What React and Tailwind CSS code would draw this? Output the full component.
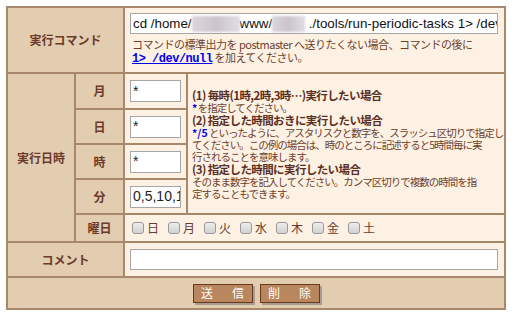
import React from "react";

const jp = "font-['Noto_Sans_CJK_JP','Noto_Sans',sans-serif]";

function Head({ children, className = "" }) {
  return (
    <div
      className={`bg-[#e3cdb0] flex items-center justify-center text-[12px] font-bold text-[#6b3a2c] ${className}`}
    >
      {children}
    </div>
  );
}

function Cell({ children, className = "" }) {
  return <div className={`bg-[#fdf1e4] ${className}`}>{children}</div>;
}

function FieldInput({ value }) {
  return (
    <Cell className="flex items-center pl-[5px]">
      <div className="w-[51px] h-[22px] bg-white border border-[#a6a6a6] flex items-center px-[2px] text-[14px] text-[#222] font-['Liberation_Sans',sans-serif] overflow-hidden whitespace-nowrap">
        {value}
      </div>
    </Cell>
  );
}

function Blur({ w }) {
  return (
    <span
      className={`inline-block h-[16px] align-middle bg-gradient-to-r from-[#dcd6dc] via-[#cbc4ce] to-[#e2dde3] blur-[1px] ${w}`}
    />
  );
}

function Box() {
  return (
    <span className="inline-block w-[12px] h-[12px] rounded-[3px] border border-[#9a9a9a] bg-gradient-to-b from-[#eeeeee] to-[#d2d2d2] mr-[3px] align-middle" />
  );
}

function Btn({ a, b }) {
  return (
    <button className="w-[60px] h-[19px] bg-[#b8865f] border border-[#6b3a1c] shadow-[2px_2px_0_#a89c90] text-white text-[12px] leading-none flex items-center justify-center gap-[19px] whitespace-nowrap">
      <span>{a}</span>
      <span>{b}</span>
    </button>
  );
}

export default function App() {
  const days = ["日", "月", "火", "水", "木", "金", "土"];
  return (
    <div className={`w-[512px] h-[316px] bg-white pt-[6px] pl-[6px] ${jp}`}>
      <div className="w-[500px] grid grid-cols-[66px_47px_61px_316px] grid-rows-[64px_34px_33px_33px_33px_26px_33px_30px] gap-[2px] p-[2px] bg-[#a9876b]">
        <Head className="col-span-2">実行コマンド</Head>
        <Cell className="col-span-2 pl-[5px] pt-[5px] text-[11px] leading-[13px] text-[#6e3f2d]">
          <div className="w-[368px] h-[21px] bg-white border border-[#a6a6a6] flex items-center px-[2px] text-[13.33px] text-[#111] font-['Liberation_Sans',sans-serif] whitespace-nowrap overflow-hidden">
            cd /home/
            <Blur w="w-[48px] shrink-0" />
            www/
            <Blur w="w-[33px] shrink-0" />
            &nbsp;./tools/run-periodic-tasks 1&gt; /dev/null
          </div>
          <div className="mt-[4px] pl-[2px] whitespace-nowrap tracking-[-0.5px]">
            コマンドの標準出力を postmaster へ送りたくない場合、コマンドの後に
            <br />
            <span className="text-[#0000ee] font-bold underline font-['Liberation_Mono',monospace] text-[12px] tracking-[-0.5px]">
              1&gt; /dev/null
            </span>{" "}
            を加えてください。
          </div>
        </Cell>

        <Head className="row-span-5">実行日時</Head>
        <Head>月</Head>
        <FieldInput value="*" />
        <Cell className="row-span-4 flex flex-col justify-center pl-[4px] pt-[2px] text-[10.5px] leading-[12px] text-[#6e3f2d] whitespace-nowrap tracking-[-1px] overflow-hidden">
          <div className="font-bold text-[#5a2f22] text-[11.5px] leading-[13px] tracking-[-0.6px]">
            (1) 毎時(1時,2時,3時…)実行したい場合
          </div>
          <div>
            <span className="text-[#0000ee] font-bold">*</span> を指定してください。
          </div>
          <div className="font-bold text-[#5a2f22] text-[11.5px] leading-[13px] tracking-[-0.6px]">
            (2) 指定した時間おきに実行したい場合
          </div>
          <div>
            <span className="text-[#0000ee] font-bold tracking-[0px]">*/5</span>{" "}
            といったように、アスタリスクと数字を、スラッシュ区切りで指定し
          </div>
          <div>てください。この例の場合は、時のところに記述すると5時間毎に実</div>
          <div>行されることを意味します。</div>
          <div className="font-bold text-[#5a2f22] text-[11.5px] leading-[13px] tracking-[-0.6px]">
            (3) 指定した時間に実行したい場合
          </div>
          <div>そのまま数字を記入してください。カンマ区切りで複数の時間を指</div>
          <div>定することもできます。</div>
        </Cell>
        <Head>日</Head>
        <FieldInput value="*" />
        <Head>時</Head>
        <FieldInput value="*" />
        <Head>分</Head>
        <FieldInput value="0,5,10,15" />
        <Head>曜日</Head>
        <Cell className="col-span-2 flex items-center pl-[7px] gap-[9px] text-[12px] text-[#6b3a2c]">
          {days.map((d) => (
            <label key={d} className="flex items-center">
              <Box />
              {d}
            </label>
          ))}
        </Cell>

        <Head className="col-span-2">コメント</Head>
        <Cell className="col-span-2 flex items-center pl-[5px]">
          <div className="w-[368px] h-[21px] bg-white border border-[#a6a6a6]" />
        </Cell>

        <div className="col-span-4 bg-[#e3cdb0] flex items-center justify-center gap-[7px]">
          <Btn a="送" b="信" />
          <Btn a="削" b="除" />
        </div>
      </div>
    </div>
  );
}
